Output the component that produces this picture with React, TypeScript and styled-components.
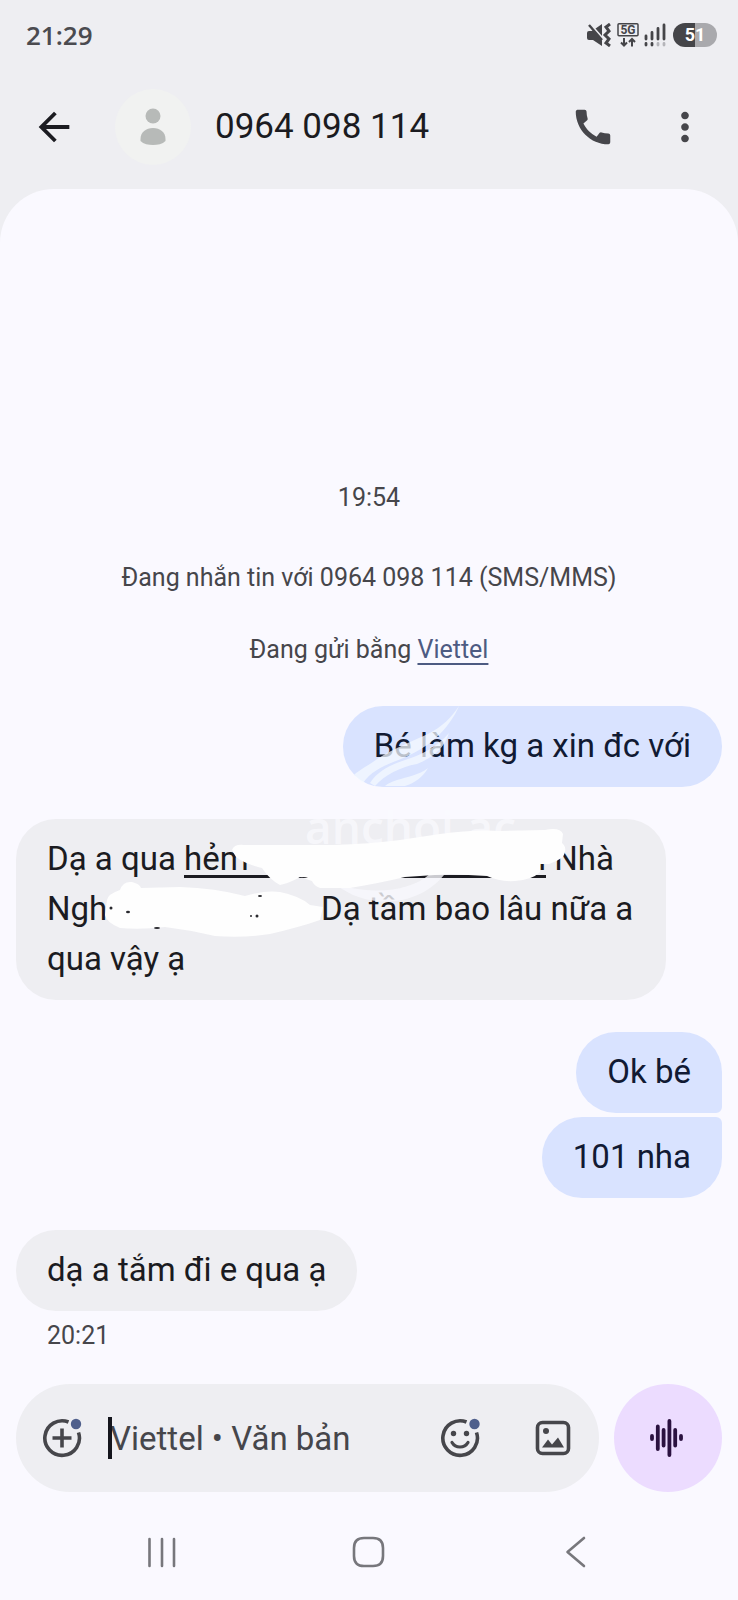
import React from "react";
import styled, { createGlobalStyle } from "styled-components";
import { MdArrowBack, MdCall, MdMoreVert } from "react-icons/md";

const GlobalStyle = createGlobalStyle`
  *, *::before, *::after { box-sizing: border-box; }
  body {
    margin: 0;
    background: #faf9ff;
    font-family: Roboto, "Noto Sans", sans-serif;
    color: #1b1b21;
  }
  button, input { font: inherit; color: inherit; }
`;

const Screen = styled.div`
  display: flex;
  flex-direction: column;
  min-height: 100vh;
  background: #eeeef2;
`;

const StatusBar = styled.div`
  display: flex;
  align-items: center;
  justify-content: space-between;
  height: 70px;
  padding: 0 21px 0 26px;
`;

const Clock = styled.time`
  font-family: "Open Sans", "Noto Sans", sans-serif;
  font-size: 26px;
  font-weight: 600;
  line-height: 32px;
  color: #4b4b50;
`;

const StatusIcons = styled.div`
  display: flex;
  align-items: center;
  gap: 5px;
`;

const Battery = styled.div`
  width: 44px;
  height: 24px;
  margin-left: 2px;
  border-radius: 12px;
  background: linear-gradient(90deg, #454549 51%, #a9a9ad 51%);
  color: #fff;
  font-size: 18px;
  font-weight: 700;
  line-height: 24px;
  text-align: center;
`;

const Header = styled.header`
  display: flex;
  align-items: center;
  height: 119px;
  padding: 0 30px 6px 31px;
`;

const IconButton = styled.button`
  display: flex;
  align-items: center;
  justify-content: center;
  flex: none;
  padding: 0;
  border: 0;
  background: none;
  color: #46464b;
  svg { display: block; }
`;

const BackButton = styled(IconButton)`
  color: #1b1b21;
  margin-right: 38px;
`;

const Avatar = styled.div`
  display: flex;
  align-items: center;
  justify-content: center;
  width: 76px;
  height: 76px;
  flex: none;
  border-radius: 50%;
  background: #f1f2f1;
`;

const Title = styled.h1`
  flex: 1;
  margin: 0 0 0 24px;
  font-size: 35px;
  line-height: 44px;
  font-weight: 400;
  white-space: nowrap;
`;

const HeaderActions = styled.div`
  display: flex;
  gap: 46px;
`;

const Sheet = styled.main`
  display: flex;
  flex-direction: column;
  flex: 1;
  border-radius: 54px 54px 0 0;
  background: #faf9ff;
`;

const Conversation = styled.section`
  display: flex;
  flex-direction: column;
  justify-content: flex-end;
  flex: 1;
  padding: 32px 16px;
`;

const Note = styled.p<{ $gap: number }>`
  margin: 0 0 ${(p) => p.$gap}px;
  font-size: 25px;
  line-height: 32px;
  text-align: center;
  color: #46464b;
`;

const CarrierLink = styled.a`
  color: #4d5b82;
  text-decoration: underline;
  text-decoration-thickness: 2px;
  text-underline-offset: 5px;
`;

type BubbleProps = { $mine?: boolean; $joined?: "top" | "bottom"; $wide?: boolean };

const Bubble = styled.div<BubbleProps>`
  position: relative;
  align-self: ${(p) => (p.$mine ? "flex-end" : "flex-start")};
  width: ${(p) => (p.$wide ? "92%" : "auto")};
  margin-top: ${(p) => (p.$joined === "top" ? 4 : 32)}px;
  padding: 15px 31px 16px;
  border-radius: 40px;
  ${(p) => p.$joined === "bottom" && "border-bottom-right-radius: 6px;"}
  ${(p) => p.$joined === "top" && "border-top-right-radius: 6px;"}
  background: ${(p) => (p.$mine ? "#d9e3ff" : "#eeeef2")};
  color: ${(p) => (p.$mine ? "#111a33" : "#1b1b21")};
  font-size: 33px;
  line-height: 50px;
  white-space: nowrap;
`;

const Address = styled.a`
  display: inline-flex;
  justify-content: space-between;
  width: 362px;
  height: 44px;
  border-bottom: 3px solid #1b1b21;
  color: inherit;
  text-decoration: none;
  vertical-align: top;
`;

const HiddenName = styled.span`
  display: inline-block;
  width: 274px;
`;

const Overlay = styled.svg`
  position: absolute;
  top: 0;
  left: 0;
  overflow: visible;
  pointer-events: none;
`;

const Stamp = styled.time`
  margin: 9px 0 0 31px;
  font-size: 25px;
  line-height: 32px;
  color: #46464b;
`;

const Composer = styled.form`
  display: flex;
  align-items: center;
  gap: 15px;
  padding: 0 16px;
`;

const Field = styled.div`
  display: flex;
  align-items: center;
  flex: 1;
  min-width: 0;
  height: 108px;
  padding: 0 26px;
  border-radius: 54px;
  background: #eeeef2;
`;

const MessageInput = styled.input`
  flex: 1;
  min-width: 0;
  height: 42px;
  margin: 0 24px 0 26px;
  padding: 0;
  border: 0;
  border-left: 4px solid #14151d;
  outline: 0;
  background: none;
  font-size: 33px;
  text-indent: -2px;
  &::placeholder { color: #46464b; opacity: 1; }
`;

const FieldActions = styled.div`
  display: flex;
  gap: 53px;
`;

const VoiceButton = styled(IconButton)`
  width: 108px;
  height: 108px;
  border-radius: 50%;
  background: #ecdcff;
`;

const SystemNav = styled.nav`
  display: grid;
  grid-template-columns: repeat(3, 1fr);
  align-items: center;
  height: 108px;
  padding: 12px 8% 0;
`;

const MuteIcon = () => (
  <svg width="26" height="24" viewBox="0 0 26 24" aria-hidden="true">
    <path d="M1 10q0-2 2-2h3l10-7v22l-9-6H3q-2 0-2-2z" fill="#454549" />
    <path d="M1-2l17 19.500" stroke="#eeeef2" strokeWidth="3" />
    <path d="M3 2l13 15" stroke="#454549" strokeWidth="2.400" />
    <path d="M24 1l-4 3 3 4-4 4 4 4-3 4 4 3" fill="none" stroke="#454549" strokeWidth="3" />
  </svg>
);

const NetworkIcon = () => (
  <svg width="22" height="24" viewBox="0 0 22 24" aria-hidden="true">
    <rect x="1" y="0.8" width="20" height="12" rx="1" fill="none" stroke="#454549" strokeWidth="1.5" />
    <text x="11" y="10.8" textAnchor="middle" fontSize="12" fontWeight="700" fill="#454549">5G</text>
    <path d="M7 15v7M4 19.500l3 3 3-3M15 23.500v-7M12 19l3-3 3 3" fill="none" stroke="#454549" strokeWidth="2" />
  </svg>
);

const SignalIcon = () => (
  <svg width="22" height="24" viewBox="0 0 22 24" aria-hidden="true">
    <g stroke="#454549" strokeWidth="2.800" strokeLinecap="round">
      <path d="M2 13v3M8 9.500v6.500M14 5.500v10.500M20 2v14" />
      <path d="M2 20.500v1.500M8 20.500v1.500" />
      <path d="M14 20.500v1.500M20 20.500v1.500" stroke="#b5b5ba" />
    </g>
  </svg>
);

const PersonIcon = () => (
  <svg width="26" height="38" viewBox="0 0 26 38" aria-hidden="true">
    <g fill="#b7bab8">
      <circle cx="13" cy="8" r="7.500" />
      <path d="M.5 31C.5 24 6 20 13 20s12.500 4 12.500 11v2c-3 3-8 4-12.500 4S3.500 36 .5 33z" />
    </g>
  </svg>
);

const PlusIcon = () => (
  <svg width="40" height="40" viewBox="0 0 40 40" fill="none" stroke="#46464b" strokeWidth="3.600" aria-hidden="true">
    <path d="M26.500 4A17.300 17.300 0 1 0 36.500 14.500M20 10.500v19M10.500 20h19" />
    <circle cx="34" cy="6" r="5.200" fill="#4f5f8c" stroke="none" />
  </svg>
);

const EmojiIcon = () => (
  <svg width="40" height="40" viewBox="0 0 40 40" fill="none" stroke="#46464b" strokeWidth="3.600" aria-hidden="true">
    <path d="M26.500 4A17.300 17.300 0 1 0 36.500 14.500" />
    <path d="M12 24.500c3.500 6 12.500 6 16 0" strokeLinecap="round" strokeWidth="3.200" />
    <g fill="#46464b" stroke="none">
      <circle cx="13.500" cy="15.500" r="2.700" />
      <circle cx="26.500" cy="15.500" r="2.700" />
    </g>
    <circle cx="34.500" cy="6" r="5.200" fill="#4f5f8c" stroke="none" />
  </svg>
);

const ImageIcon = () => (
  <svg width="40" height="40" viewBox="0 0 40 40" aria-hidden="true">
    <rect x="4.500" y="4.500" width="31" height="31" rx="5" fill="none" stroke="#46464b" strokeWidth="3.600" />
    <circle cx="13" cy="13" r="3" fill="#46464b" />
    <path d="M9 29.500l6-8 4 5 6-7 6 10z" fill="#46464b" />
  </svg>
);

const VoiceIcon = () => (
  <svg width="40" height="40" viewBox="0 0 40 40" stroke="#2b1240" strokeWidth="3.800" strokeLinecap="round" aria-hidden="true">
    <path d="M4 18v3M9.800 8.500v22.500M15.600 12v15.500M21.400 3v34M27.200 12v15.500M33 18v3" />
  </svg>
);

const NavGlyph = ({ d }: { d: string }) => (
  <svg width="36" height="36" viewBox="0 0 36 36" fill="none" stroke="#77777c" strokeWidth="2.600" strokeLinecap="round" strokeLinejoin="round" aria-hidden="true">
    <path d={d} />
  </svg>
);

const FeatherMark = () => (
  <Overlay width="160" height="110" viewBox="0 0 160 110" fill="#f4faff" aria-hidden="true">
    <g fillOpacity="0.75">
      <path d="M116 0C108 12 100 20 85 28 64 37 42 47 30 56 20 62 14 66 11 69l9 8c8-12 22-18 38-24 20-8 36-20 46-33 6-8 10-15 12-20z" />
      <path d="M106 27C94 41 78 49 62 54 46 59 34 66 27 77l5 3c10-11 25-19 42-22 16-6 28-17 32-31z" />
      <path d="M85 62C76 69 64 71 54 74c-6 2-10 4-12 6h20c10-3 18-9 23-18z" />
    </g>
  </Overlay>
);

const Smears = () => (
  <Overlay width="649" height="181" viewBox="16 819 649 181" aria-hidden="true">
    <text x="305" y="844" fontFamily="Open Sans" fontSize="46" fontWeight="600" fill="#fbfbff" fillOpacity="0.7">anchoi.ac</text>
    <path d="M335 884C370 912 420 905 444 875L430 874C410 892 370 895 335 884z" fill="#f8f8fc" fillOpacity="0.8" />
    <g fill="#fefefe">
      <path d="M232 850Q234 844 244 845L333 845Q370 844 400 840L440 834Q475 829 500 831L545 830Q560 827 563 834L562 843Q568 848 563 857Q556 862 549 864L540 864 540 872Q532 880 515 881Q500 882 487 876L450 874 405 877Q380 883 350 888L320 888Q314 886 312 881L300 877Q292 882 280 885Q270 880 262 868Q245 864 236 857z" />
      <path d="M120 890Q123 881 132 882Q140 884 141 888L180 887Q215 888 245 896Q265 890 280 892Q300 896 310 905L323 907 320 920Q300 927 270 934Q245 938 215 936Q190 930 165 927Q140 930 120 928Q106 922 105 915L107 900Q108 894 120 890z" />
    </g>
    <g fill="#29292e">
      <circle cx="111" cy="908" r="1.500" />
      <ellipse cx="128" cy="912" rx="2" ry="1.200" />
      <ellipse cx="260" cy="896" rx="2" ry="1" />
      <circle cx="251" cy="916" r="1" />
      <circle cx="257" cy="916" r="1.500" />
      <ellipse cx="157" cy="928" rx="3" ry="1" />
      <path d="M299 878q5-2 9 0z" />
    </g>
  </Overlay>
);

export default function App() {
  return (
    <Screen>
      <GlobalStyle />
      <StatusBar>
        <Clock>21:29</Clock>
        <StatusIcons>
          <MuteIcon />
          <NetworkIcon />
          <SignalIcon />
          <Battery>51</Battery>
        </StatusIcons>
      </StatusBar>
      <Header>
        <BackButton type="button" aria-label="Quay lại">
          <MdArrowBack size={46} />
        </BackButton>
        <Avatar>
          <PersonIcon />
        </Avatar>
        <Title>0964 098 114</Title>
        <HeaderActions>
          <IconButton type="button" aria-label="Gọi">
            <MdCall size={46} />
          </IconButton>
          <IconButton type="button" aria-label="Tùy chọn khác">
            <MdMoreVert size={46} />
          </IconButton>
        </HeaderActions>
      </Header>
      <Sheet>
        <Conversation>
          <Note $gap={48}>19:54</Note>
          <Note $gap={40}>Đang nhắn tin với 0964 098 114 (SMS/MMS)</Note>
          <Note $gap={8}>
            Đang gửi bằng <CarrierLink href="#sim">Viettel</CarrierLink>
          </Note>
          <Bubble $mine>
            Bé làm kg a xin đc với
            <FeatherMark />
          </Bubble>
          <Bubble $wide>
            Dạ a qua <Address href="#map"><span>hẻm</span><span>n</span></Address> Nhà
            <br />
            <HiddenName>Ngh</HiddenName>Dạ tầm bao lâu nữa a
            <br />
            qua vậy ạ
            <Smears />
          </Bubble>
          <Bubble $mine $joined="bottom">Ok bé</Bubble>
          <Bubble $mine $joined="top">101 nha</Bubble>
          <Bubble>dạ a tắm đi e qua ạ</Bubble>
          <Stamp>20:21</Stamp>
        </Conversation>
        <Composer>
          <Field>
            <IconButton type="button" aria-label="Đính kèm">
              <PlusIcon />
            </IconButton>
            <MessageInput type="text" aria-label="Tin nhắn" placeholder="Viettel • Văn bản" />
            <FieldActions>
              <IconButton type="button" aria-label="Biểu tượng cảm xúc">
                <EmojiIcon />
              </IconButton>
              <IconButton type="button" aria-label="Thư viện ảnh">
                <ImageIcon />
              </IconButton>
            </FieldActions>
          </Field>
          <VoiceButton type="button" aria-label="Ghi âm">
            <VoiceIcon />
          </VoiceButton>
        </Composer>
        <SystemNav>
          <IconButton type="button" aria-label="Gần đây">
            <NavGlyph d="M5.500 5v27M18 5v27M30 5v27" />
          </IconButton>
          <IconButton type="button" aria-label="Trang chính">
            <NavGlyph d="M13 4h9q10 0 10 10v8q0 10-10 10h-9q-10 0-10-10v-8q0-10 10-10z" />
          </IconButton>
          <IconButton type="button" aria-label="Trở về">
            <NavGlyph d="M26 4L9.500 18 26 32" />
          </IconButton>
        </SystemNav>
      </Sheet>
    </Screen>
  );
}
